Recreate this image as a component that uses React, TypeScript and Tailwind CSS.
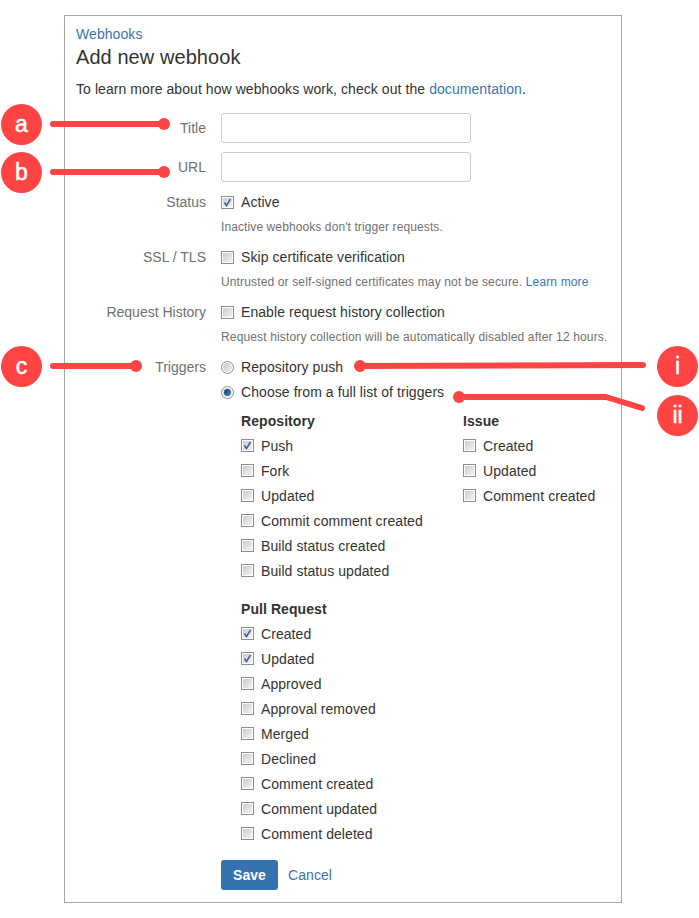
const Box = ({ checked = false }: { checked?: boolean }) => (
  <span className="relative block h-[13px] w-[13px] shrink-0 border border-[#8e8e8e] bg-white p-px">
    <span className="block h-full w-full bg-gradient-to-br from-[#c8cbd2] to-[#f4f4f4]" />
    {checked && (
      <svg viewBox="0 0 13 13" className="absolute -left-px -top-px h-[13px] w-[13px]">
        <path d="M3.5 6.5 L5.5 9.5 L9.5 3" fill="none" stroke="#3f5f9f" strokeWidth="1.5" />
      </svg>
    )}
  </span>
);

const Radio = ({ checked = false }: { checked?: boolean }) => (
  <span className="flex h-[13px] w-[13px] shrink-0 items-center justify-center rounded-full border border-[#8e8e8e] bg-white p-px">
    <span className="flex h-full w-full items-center justify-center rounded-full bg-gradient-to-br from-[#c8c8c8] to-[#f0f0f0]">
      {checked && <span className="h-[7px] w-[7px] rounded-full bg-gradient-to-br from-[#16375f] to-[#3b8fd8]" />}
    </span>
  </span>
);

const Check = ({ label, checked = false }: { label: string; checked?: boolean }) => (
  <div className="flex h-[25px] items-center gap-[7px]">
    <Box checked={checked} />
    <span>{label}</span>
  </div>
);

const Row = ({ label, children, className = "" }: { label: string; children: React.ReactNode; className?: string }) => (
  <div className={`flex gap-[15px] ${className}`}>
    <div className="w-[130px] shrink-0 text-right tracking-normal text-[#707070]">{label}</div>
    <div className="min-w-0 flex-1">{children}</div>
  </div>
);

const Group = ({ title, items, className = "" }: { title: string; items: [string, boolean?][]; className?: string }) => (
  <div className={className}>
    <h4 className="flex h-[25px] items-center font-bold">{title}</h4>
    {items.map(([label, checked]) => (
      <Check key={label} label={label} checked={checked} />
    ))}
  </div>
);

const Marker = ({ text, className }: { text: string; className: string }) => (
  <div className={`absolute flex h-[41px] w-[41px] items-center justify-center rounded-full bg-[#ff4444] text-[23px] leading-none tracking-normal text-white [-webkit-text-stroke:0.5px_white] ${className}`}>
    {text}
  </div>
);

export default function App() {
  return (
    <div className="relative h-[918px] w-[699px] overflow-hidden bg-white pt-[15px] font-['Liberation_Sans',Arial,sans-serif] text-[14px] leading-[20px] tracking-[0.07px] text-[#333333]">
      <div className="ml-[64px] h-[888px] w-[558px] border border-[#a6a6a6] pl-[11px] pt-[8px]">
        <a className="block text-[#3b73af]">Webhooks</a>
        <h2 className="mt-[1px] text-[20px] leading-[24px]">Add new webhook</h2>
        <p className="mt-[10px]">
          To learn more about how webhooks work, check out the <a className="text-[#3b73af]">documentation</a>.
        </p>

        <Row label="Title" className="mt-[14px] items-center">
          <input className="block h-[30px] w-[250px] rounded-[3px] border border-[#cccccc]" />
        </Row>
        <Row label="URL" className="mt-[9px] items-center">
          <input className="block h-[30px] w-[250px] rounded-[3px] border border-[#cccccc]" />
        </Row>

        <Row label="Status" className="mt-[10px]">
          <div className="flex items-center gap-[7px]">
            <Box checked />
            <span>Active</span>
          </div>
          <p className="mt-[7px] h-[16px] text-[12px] leading-[16px] tracking-[0.1px] text-[#707070]">Inactive webhooks don't trigger requests.</p>
        </Row>
        <Row label="SSL / TLS" className="mt-[12px]">
          <div className="flex items-center gap-[7px]">
            <Box />
            <span>Skip certificate verification</span>
          </div>
          <p className="mt-[7px] h-[16px] text-[12px] leading-[16px] tracking-[0.14px] text-[#707070]">
            Untrusted or self-signed certificates may not be secure. <a className="text-[#3b73af]">Learn more</a>
          </p>
        </Row>
        <Row label="Request History" className="mt-[12px]">
          <div className="flex items-center gap-[7px]">
            <Box />
            <span>Enable request history collection</span>
          </div>
          <p className="mt-[7px] h-[16px] text-[12px] leading-[16px] tracking-[0.15px] text-[#707070]">Request history collection will be automatically disabled after 12 hours.</p>
        </Row>

        <Row label="Triggers" className="mt-[12px]">
          <div className="flex items-center gap-[7px]">
            <Radio />
            <span>Repository push</span>
          </div>
          <div className="mt-[5px] flex items-center gap-[7px]">
            <Radio checked />
            <span>Choose from a full list of triggers</span>
          </div>
          <div className="mt-[6px] flex pl-[20px]">
            <Group
              className="w-[222px]"
              title="Repository"
              items={[["Push", true], ["Fork"], ["Updated"], ["Commit comment created"], ["Build status created"], ["Build status updated"]]}
            />
            <Group title="Issue" items={[["Created"], ["Updated"], ["Comment created"]]} />
          </div>
          <Group
            className="mt-[13px] pl-[20px]"
            title="Pull Request"
            items={[["Created", true], ["Updated", true], ["Approved"], ["Approval removed"], ["Merged"], ["Declined"], ["Comment created"], ["Comment updated"], ["Comment deleted"]]}
          />
          <div className="mt-[14px] flex items-center gap-[10px]">
            <button className="h-[30px] w-[57px] rounded-[3px] bg-[#3572b0] font-bold text-white">Save</button>
            <a className="text-[#3b73af]">Cancel</a>
          </div>
        </Row>
      </div>

      {/* callouts */}
      <svg className="absolute left-0 top-0 h-[918px] w-[699px]" viewBox="0 0 699 918" fill="none" stroke="#ff4444" strokeWidth="6" strokeLinecap="round" strokeLinejoin="round">
        <path d="M53 124H164M53 172H164M53 366H136M360 366L643 365M459 397H606L642 408" />
        <g fill="#ff4444" stroke="none">
          <circle cx="164" cy="124" r="6" />
          <circle cx="164" cy="172" r="6" />
          <circle cx="136" cy="366" r="6" />
          <circle cx="360" cy="366" r="6" />
          <circle cx="459" cy="397" r="6" />
        </g>
      </svg>
      <Marker text="a" className="left-[1px] top-[104px]" />
      <Marker text="b" className="left-[1px] top-[152px]" />
      <Marker text="c" className="left-[1px] top-[346px]" />
      <Marker text="i" className="left-[657px] top-[346px]" />
      <Marker text="ii" className="left-[657px] top-[395px]" />
    </div>
  );
}
